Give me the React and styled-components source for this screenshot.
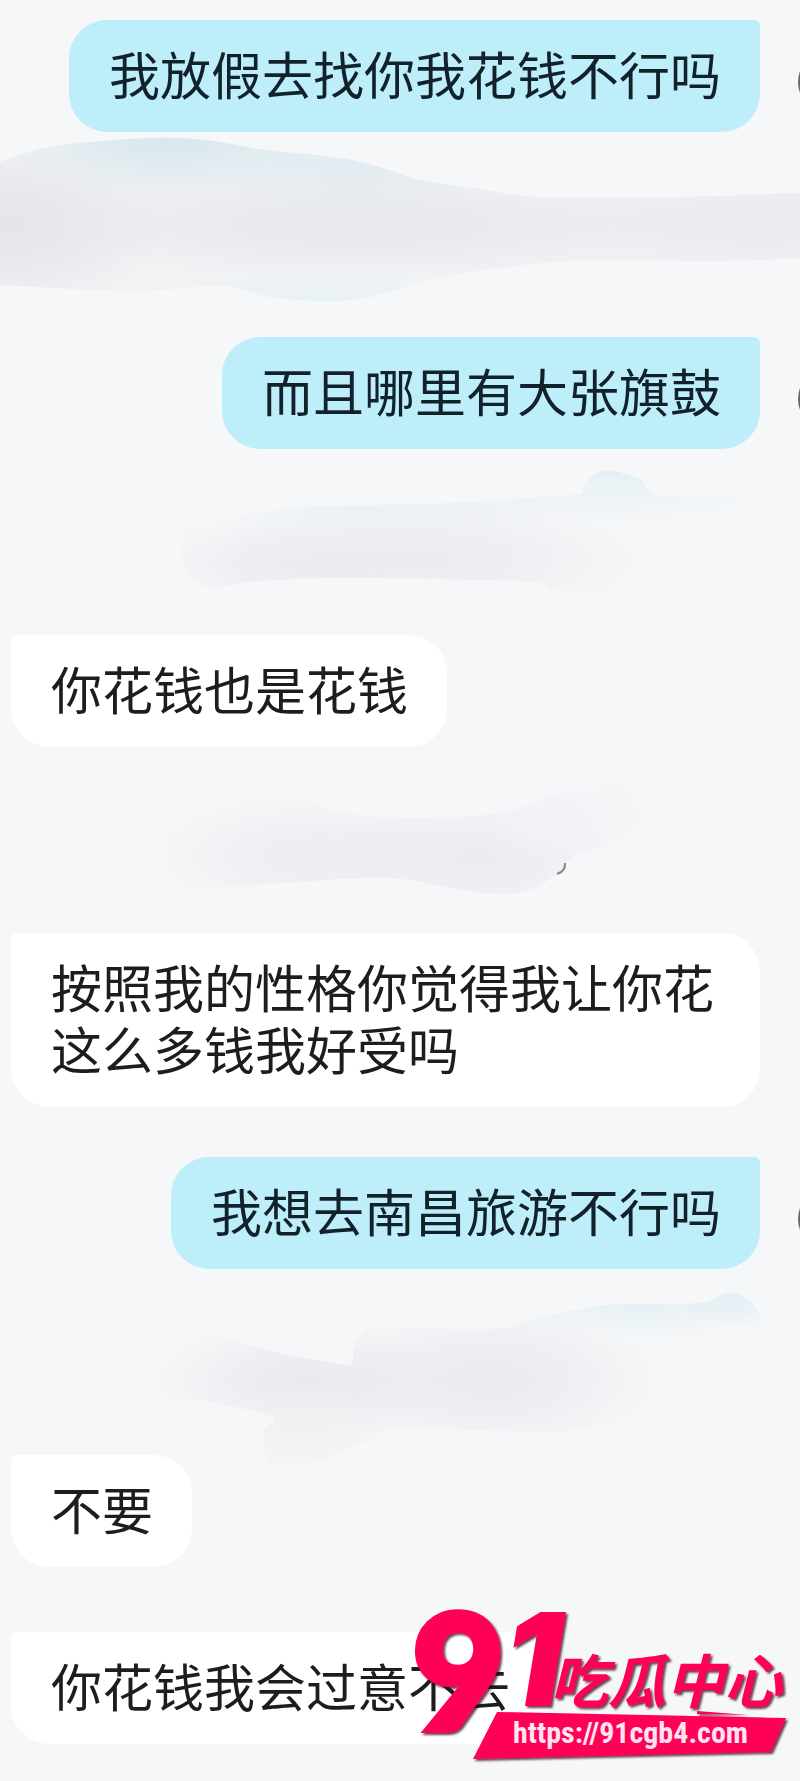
import React from "react";
import styled, { createGlobalStyle } from "styled-components";

const GlobalStyle = createGlobalStyle`
  * { box-sizing: border-box; }
  body {
    margin: 0;
    background: #f5f7f9;
    font-family: "Noto Sans CJK SC", "Noto Sans", sans-serif;
  }
`;

const Chat = styled.main`
  position: relative;
  display: flex;
  flex-direction: column;
  padding: 20px 0 37px;
  overflow: hidden;
`;

const Row = styled.div`
  display: flex;
  align-items: flex-start;
  justify-content: ${(p) => (p.$mine ? "flex-end" : "flex-start")};
  padding-left: 11px;
  padding-right: ${(p) => (p.$mine ? "0" : "40px")};
`;

const Bubble = styled.p`
  margin: 0;
  padding: 22px 39px 28px 40px;
  font-size: 51px;
  line-height: 62px;
  color: ${(p) => (p.$mine ? "#11222a" : "#1b1d1f")};
  background: ${(p) => (p.$mine ? "#bfeefb" : "#ffffff")};
  border-radius: ${(p) => (p.$mine ? "38px 6px 38px 38px" : "6px 38px 38px 38px")};
`;

const Avatar = styled.span`
  flex: none;
  width: 62px;
  height: 62px;
  margin: 31px -60px 0 38px;
  border-radius: 50%;
  background: #66696b;
`;

const Gap = styled.div`
  height: ${(p) => p.$size}px;
`;

const SmudgeArt = styled.svg`
  display: block;
  width: 100%;
  height: ${(p) => p.$size}px;
  overflow: visible;
`;

const Watermark = styled.svg`
  position: absolute;
  right: 0;
  bottom: 0;
  width: 400px;
  height: 191px;
`;

// Closed smooth curve through a list of points.
function smooth(points) {
  const n = points.length;
  const at = (i) => points[(i + n) % n];
  let d = `M${at(0)[0]} ${at(0)[1]}`;
  for (let i = 0; i < n; i += 1) {
    const [a, b, c, e] = [at(i - 1), at(i), at(i + 1), at(i + 2)];
    const p = [b[0] + (c[0] - a[0]) / 6, b[1] + (c[1] - a[1]) / 6];
    const q = [c[0] - (e[0] - b[0]) / 6, c[1] - (e[1] - b[1]) / 6];
    d += `C${p[0]} ${p[1]} ${q[0]} ${q[1]} ${c[0]} ${c[1]}`;
  }
  return `${d}Z`;
}

function Smudge({ id, size, base, points, tints, children }) {
  return (
    <SmudgeArt $size={size} viewBox={`0 0 800 ${size}`} preserveAspectRatio="none" aria-hidden="true">
      <defs>
        <clipPath id={`${id}-clip`}>
          <path d={smooth(points)} />
        </clipPath>
        {tints.map((t, i) => (
          <radialGradient id={`${id}-${i}`} key={i}>
            <stop offset="0" stopColor={t.color} stopOpacity="1" />
            <stop offset="0.45" stopColor={t.color} stopOpacity="0.7" />
            <stop offset="1" stopColor={t.color} stopOpacity="0" />
          </radialGradient>
        ))}
      </defs>
      <g clipPath={`url(#${id}-clip)`}>
        <rect x="-20" y="-20" width="840" height={size + 40} fill={base} />
        {tints.map((t, i) => (
          <ellipse key={i} cx={t.x} cy={t.y} rx={t.rx} ry={t.ry} fill={`url(#${id}-${i})`} />
        ))}
      </g>
      {children}
    </SmudgeArt>
  );
}

const SMUDGES = {
  first: {
    size: 205,
    base: "#f0f2f4",
    points: [
      [-90, 60], [-30, 42], [0, 30], [40, 17], [79, 11], [153, 6], [205, 8], [260, 17], [340, 26], [380, 35], [420, 48],
      [480, 57], [540, 65], [680, 65], [800, 61], [860, 60], [860, 122], [800, 126], [720, 129], [580, 129], [500, 136],
      [430, 148], [370, 165], [325, 169], [270, 165], [220, 154], [130, 159], [0, 153], [-60, 151],
    ],
    tints: [
      { x: 170, y: 5, rx: 170, ry: 60, color: "#d9e7ee" },
      { x: 350, y: 30, rx: 160, ry: 50, color: "#e1ecf1" },
      { x: 320, y: 165, rx: 110, ry: 30, color: "#e8f1f5" },
      { x: 0, y: 92, rx: 170, ry: 85, color: "#e4e5e9" },
      { x: 360, y: 92, rx: 330, ry: 55, color: "#e7e8ec" },
      { x: 760, y: 90, rx: 260, ry: 55, color: "#eaebef" },
    ],
  },
  second: {
    size: 186,
    base: "#f4f6f8",
    points: [
      [184, 82], [200, 75], [235, 68], [310, 58], [450, 54], [540, 48], [580, 45], [583, 38], [595, 25], [610, 22],
      [640, 30], [658, 46], [737, 50], [752, 64], [754, 88], [656, 91], [655, 141], [560, 142],
      [535, 133], [430, 130], [320, 129], [250, 133], [215, 138], [192, 131], [183, 114],
    ],
    tints: [
      { x: 612, y: 20, rx: 75, ry: 34, color: "#dfedf3" },
      { x: 600, y: 44, rx: 150, ry: 24, color: "#ebf3f6" },
      { x: 390, y: 55, rx: 200, ry: 30, color: "#edf1f4" },
      { x: 300, y: 116, rx: 150, ry: 50, color: "#ecedf0" },
      { x: 420, y: 110, rx: 210, ry: 60, color: "#ebecef" },
    ],
  },
  third: {
    size: 186,
    base: "#f4f6f8",
    points: [
      [150, 70], [175, 45], [220, 42], [270, 43], [310, 53], [345, 66], [420, 71], [500, 66], [535, 55], [560, 46],
      [590, 43], [615, 31], [650, 31], [655, 60], [640, 80], [600, 101], [575, 108], [555, 128],
      [530, 143], [500, 147], [460, 143], [410, 133], [360, 131], [270, 137], [190, 140], [172, 126], [168, 103],
    ],
    tints: [
      { x: 320, y: 110, rx: 160, ry: 60, color: "#ecedf0" },
      { x: 480, y: 112, rx: 150, ry: 65, color: "#ebecef" },
      { x: 560, y: 70, rx: 80, ry: 45, color: "#f2f3f6" },
    ],
  },
  fourth: {
    size: 186,
    base: "#f4f6f8",
    points: [
      [125, 88], [145, 61], [200, 64], [280, 84], [335, 94], [352, 95], [354, 78], [365, 62], [380, 58], [490, 60],
      [520, 54], [560, 44], [620, 35], [700, 34], [725, 24], [742, 27], [757, 41], [763, 60], [752, 86],
      [655, 88], [650, 131], [600, 156], [540, 163], [405, 159], [370, 171], [320, 192], [275, 198],
      [265, 184], [264, 161], [273, 148], [210, 133], [150, 126], [128, 110],
    ],
    tints: [
      { x: 640, y: 30, rx: 160, ry: 34, color: "#e5f1f5" },
      { x: 730, y: 24, rx: 60, ry: 34, color: "#e4f0f5" },
      { x: 310, y: 112, rx: 150, ry: 60, color: "#e9eaed" },
      { x: 300, y: 160, rx: 100, ry: 40, color: "#eff1f3" },
      { x: 490, y: 110, rx: 160, ry: 75, color: "#eaebee" },
    ],
  },
};

const Message = ({ mine, children }) => (
  <Row $mine={mine}>
    <Bubble $mine={mine}>{children}</Bubble>
    {mine && <Avatar />}
  </Row>
);

const logoFont = {
  cjk: '"Noto Sans CJK SC", sans-serif',
  nine: "Lato, sans-serif",
  one: "Inter, sans-serif",
  link: '"Liberation Sans Narrow", "Roboto Condensed", Roboto, sans-serif',
};

function SiteLogo() {
  return (
    <Watermark viewBox="0 0 400 191">
      <defs>
        <filter id="logo-shadow" x="-10%" y="-10%" width="120%" height="120%">
          <feDropShadow dx="2" dy="2" stdDeviation="1" floodColor="#33000f" floodOpacity="0.75" />
        </filter>
      </defs>
      <g fill="#ff0059" filter="url(#logo-shadow)">
        <text x="12" y="140" fontFamily={logoFont.nine} fontSize="160" fontWeight="900" stroke="#ff0059" strokeWidth="6">9</text>
        <text x="104" y="116" fontFamily={logoFont.one} fontSize="129" fontWeight="900" fontStyle="italic">1</text>
        <text x="150" y="113" fontFamily={logoFont.cjk} fontSize="58" fontWeight="700" fontStyle="italic">吃瓜中心</text>
        <path d="M97 122 386 128 371 162 73 169Z" />
        <path d="M297 121 348 125 297 124Z" />
      </g>
      <a href="https://91cgb4.com">
        <text x="113" y="153" fill="#ffe3ee" fontFamily={logoFont.link} fontSize="30" fontWeight="700">https://91cgb4.com</text>
      </a>
    </Watermark>
  );
}

export default function App() {
  return (
    <>
      <GlobalStyle />
      <Chat>
        <Message mine>我放假去找你我花钱不行吗</Message>
        <Smudge id="first" {...SMUDGES.first} />
        <Message mine>而且哪里有大张旗鼓</Message>
        <Smudge id="second" {...SMUDGES.second} />
        <Message>你花钱也是花钱</Message>
        <Smudge id="third" {...SMUDGES.third}>
          <path d="M565 116Q566 124 557 127" fill="none" stroke="#85888a" strokeWidth="2" />
        </Smudge>
        <Message>按照我的性格你觉得我让你花这么多钱我好受吗</Message>
        <Gap $size={50} />
        <Message mine>我想去南昌旅游不行吗</Message>
        <Smudge id="fourth" {...SMUDGES.fourth} />
        <Message>不要</Message>
        <Gap $size={65} />
        <Message>你花钱我会过意不去</Message>
        <SiteLogo />
      </Chat>
    </>
  );
}
